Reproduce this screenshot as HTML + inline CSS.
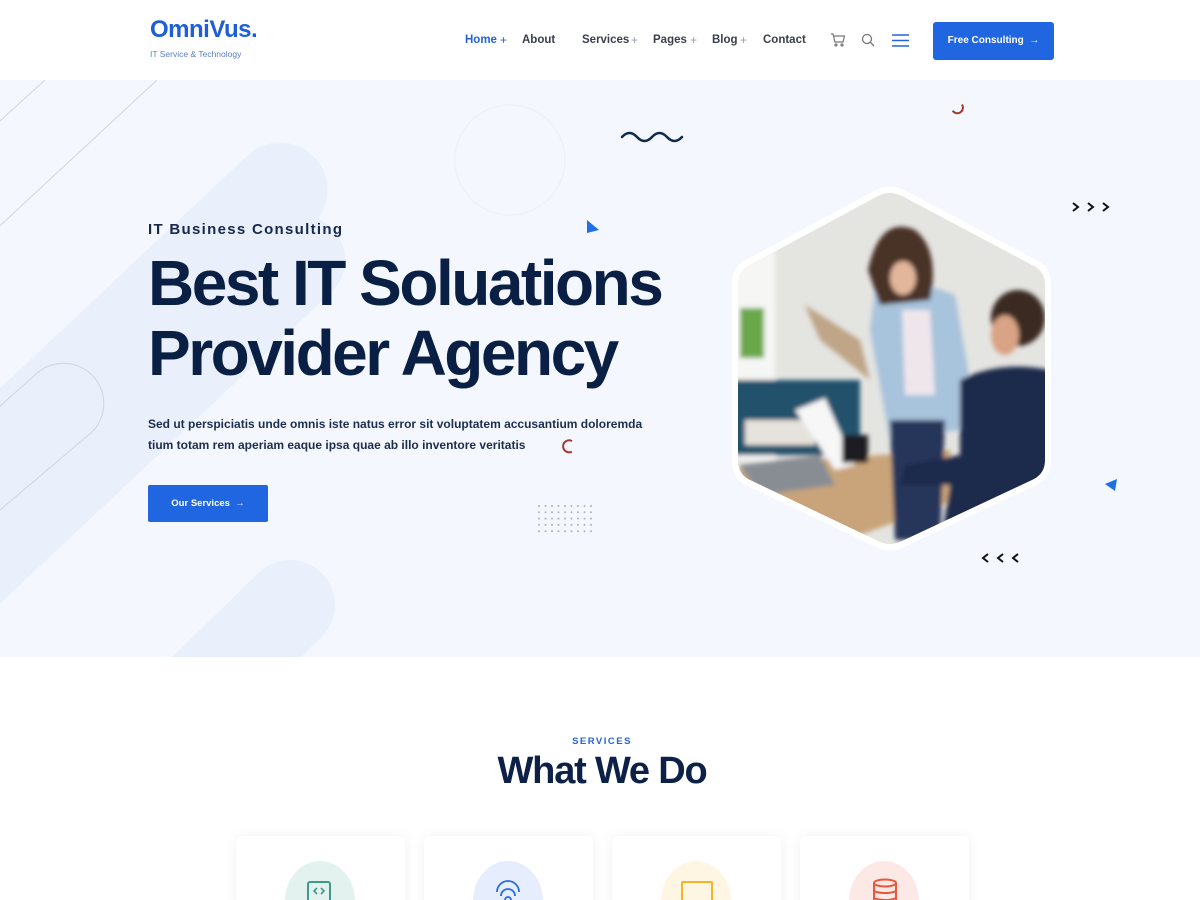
<!DOCTYPE html>
<html><head><meta charset="utf-8"><style>
*{margin:0;padding:0;box-sizing:border-box}
html,body{width:1200px;height:900px;overflow:hidden}
body{background:#fff;font-family:"Liberation Sans",sans-serif;position:relative}
.abs{position:absolute}
.nav a{position:absolute;top:34px;font-size:11.5px;font-weight:bold;color:#3b3f4a;text-decoration:none}
.plus{position:absolute;top:33px;font-size:12px;color:#9aa0ab}
</style></head><body>
<div class="abs" style="left:150px;top:16px;font-size:24px;font-weight:bold;color:#1e5fd8;letter-spacing:-0.5px">OmniVus.</div>
<div class="abs" style="left:150px;top:49px;font-size:8.5px;color:#5a7fc4">IT Service &amp; Technology</div>
<div class="nav">
<a style="left:465px;color:#2563d8">Home</a><span class="plus" style="left:500px;color:#2563d8">+</span>
<a style="left:522px">About</a>
<a style="left:582px">Services</a><span class="plus" style="left:631px">+</span>
<a style="left:653px">Pages</a><span class="plus" style="left:690px">+</span>
<a style="left:712px">Blog</a><span class="plus" style="left:740px">+</span>
<a style="left:763px">Contact</a>
</div>
<svg class="abs" style="left:830px;top:32px" width="16" height="16" viewBox="0 0 16 16" fill="none" stroke="#777" stroke-width="1.2"><path d="M1 2h2l2 8h8l1.5-6H4"/><circle cx="6" cy="13" r="1"/><circle cx="12" cy="13" r="1"/></svg>
<svg class="abs" style="left:861px;top:33px" width="14" height="14" viewBox="0 0 14 14" fill="none" stroke="#777" stroke-width="1.3"><circle cx="6" cy="6" r="4.5"/><path d="M9.5 9.5L13 13"/></svg>
<svg class="abs" style="left:892px;top:34px" width="17" height="13" viewBox="0 0 17 13" stroke="#2563d8" stroke-width="1.6"><path d="M0 1h17M0 6.5h17M0 12h17"/></svg>
<div class="abs" style="left:933px;top:22px;width:121px;height:38px;background:#1f66e0;border-radius:3px;color:#fff;font-size:10px;font-weight:bold;line-height:38px;text-align:center">Free Consulting &nbsp;→</div>

<div class="abs" style="left:0;top:80px;width:1200px;height:577px;background:#f4f8fe;overflow:hidden">
<svg width="1200" height="577" style="position:absolute;left:0;top:0">
<g stroke="#e9f0fc" stroke-linecap="round" fill="none">
<line x1="280" y1="110" x2="-60" y2="430" stroke-width="95"/>
<line x1="290" y1="525" x2="90" y2="720" stroke-width="90"/>
<line x1="300" y1="180" x2="-200" y2="650" stroke-width="90"/>
</g>
<circle cx="510" cy="80" r="55" fill="none" stroke="#edf1f8" stroke-width="1.5"/>
<line x1="45" y1="0" x2="-10" y2="50" stroke="#cfd6e0" stroke-width="1"/>
<line x1="157" y1="0" x2="-10" y2="155" stroke="#cfd6e0" stroke-width="1"/>
<path d="M0 326 L35 295 a40 40 0 0 1 57 57 L0 430" fill="none" stroke="#cfd6e0" stroke-width="1"/>
<path d="M622 57 q7.5 -8 15 0 t15 0 t15 0 t15 0" fill="none" stroke="#0f2a4e" stroke-width="2.5" stroke-linecap="round"/>
<path d="M954 23 a5 5 0 1 0 10 5" fill="none" stroke="#a33a2c" stroke-width="2" transform="rotate(-60 960 28)"/>
<path d="M576 364 a6 6 0 1 0 -7 8" fill="none" stroke="#a33a2c" stroke-width="2" transform="rotate(-40 570 368)"/>
<polygon points="587,140 599,150 587,153" fill="#1f6fe6"/>
<polygon points="1105,404 1117,399 1115,411" fill="#1f6fe6"/>
<g fill="#a9b3c2">
<g id="r"><circle cx="539" cy="426" r="1"/><circle cx="545.5" cy="426" r="1"/><circle cx="552" cy="426" r="1"/><circle cx="558.5" cy="426" r="1"/><circle cx="565" cy="426" r="1"/><circle cx="571.5" cy="426" r="1"/><circle cx="578" cy="426" r="1"/><circle cx="584.5" cy="426" r="1"/><circle cx="591" cy="426" r="1"/></g>
<use href="#r" y="6.3"/><use href="#r" y="12.6"/><use href="#r" y="18.9"/><use href="#r" y="25.2"/>
</g>
<g fill="none" stroke="#111" stroke-width="2"><path d="M1073 123l5 4-5 4M1088 123l5 4-5 4M1103 123l5 4-5 4"/><path d="M988 474l-5 4 5 4M1003 474l-5 4 5 4M1018 474l-5 4 5 4"/></g>
<defs>
<clipPath id="hx"><path d="M878 116 Q890 110 902 116 L1034 186 Q1045 192 1045 205 L1045 380 Q1045 393 1034 399 L902 461 Q890 467 878 461 L748 399 Q738 393 738 380 L738 205 Q738 192 748 186 Z"/></clipPath>
<filter id="bl"><feGaussianBlur stdDeviation="2.5"/></filter>
</defs>
<path d="M876 110 Q890 103 904 110 L1038 181 Q1051 188 1051 203 L1051 382 Q1051 397 1038 404 L904 467 Q890 474 876 467 L744 404 Q732 397 732 382 L732 203 Q732 188 744 181 Z" fill="#fff"/>
<g clip-path="url(#hx)">
<rect x="730" y="100" width="330" height="380" fill="#e4e4e1"/>
<g filter="url(#bl)">
<rect x="730" y="100" width="45" height="280" fill="#f6f6f4"/>
<rect x="740" y="228" width="24" height="50" fill="#6aa84a"/>
<path d="M805 225 L860 260 L870 300 L820 260Z" fill="#b08a62" opacity=".7"/>
<rect x="730" y="300" width="130" height="75" fill="#24516c"/>
<rect x="745" y="340" width="70" height="25" fill="#e6e2dc"/>
<path d="M740 385 L950 370 L955 420 L820 470 L730 450Z" fill="#c9a47a"/>
<path d="M875 210 Q905 195 955 215 L975 330 L960 350 L890 360 L870 250Z" fill="#a8c3dc"/>
<path d="M902 230 L930 230 L935 315 L905 315Z" fill="#efe6ec"/>
<path d="M890 340 L945 340 L940 460 L895 460Z" fill="#25365a"/>
<path d="M868 190 Q880 135 915 150 Q940 170 930 220 L880 225Z" fill="#4a3225"/>
<ellipse cx="903" cy="198" rx="13" ry="17" fill="#e2b69b"/>
<path d="M960 300 Q1000 280 1050 290 L1050 470 L940 470 L950 405 L900 405 L905 385 L960 375Z" fill="#1a2a4c"/>
<ellipse cx="1018" cy="238" rx="27" ry="28" fill="#3b2a20"/>
<ellipse cx="1005" cy="255" rx="14" ry="20" fill="#d9a385"/>
<path d="M795 330 L825 318 L855 385 L835 390Z" fill="#f7f7f7"/>
<rect x="842" y="355" width="26" height="28" fill="#1e1e20"/>
<path d="M740 385 L820 375 L835 405 L760 415Z" fill="#888d94"/>
</g>
</g>
</svg>
<div class="abs" style="left:148px;top:141px;font-size:15px;font-weight:bold;color:#17294a;letter-spacing:1.3px">IT Business Consulting</div>
<div class="abs" style="left:148px;top:168px;font-size:64px;font-weight:bold;color:#0a1f44;letter-spacing:-2.5px;line-height:70px;white-space:nowrap">Best IT Soluations<br>Provider Agency</div>
<div class="abs" style="left:148px;top:334px;font-size:12px;font-weight:bold;color:#1c2d4f;line-height:21px;width:510px">Sed ut perspiciatis unde omnis iste natus error sit voluptatem accusantium doloremda tium totam rem aperiam eaque ipsa quae ab illo inventore veritatis</div>
<div class="abs" style="left:148px;top:405px;width:120px;height:37px;background:#1f66e0;border-radius:2px;color:#fff;font-size:9.5px;font-weight:bold;line-height:37px;text-align:center">Our Services &nbsp;→</div>
</div>

<div class="abs" style="left:0;top:736px;width:1204px;text-align:center;font-size:9.5px;font-weight:bold;color:#2563d8;letter-spacing:1.5px">SERVICES</div>
<div class="abs" style="left:0;top:750px;width:1204px;text-align:center;font-size:38px;font-weight:bold;color:#0d2148;letter-spacing:-1.2px">What We Do</div>
<div class="abs" style="left:236px;top:836px;width:169px;height:80px;background:#fff;border-radius:6px;box-shadow:0 0 14px rgba(0,0,0,.06)"></div>
<div class="abs" style="left:424px;top:836px;width:169px;height:80px;background:#fff;border-radius:6px;box-shadow:0 0 14px rgba(0,0,0,.06)"></div>
<div class="abs" style="left:612px;top:836px;width:169px;height:80px;background:#fff;border-radius:6px;box-shadow:0 0 14px rgba(0,0,0,.06)"></div>
<div class="abs" style="left:800px;top:836px;width:169px;height:80px;background:#fff;border-radius:6px;box-shadow:0 0 14px rgba(0,0,0,.06)"></div>
<div class="abs" style="left:285px;top:861px;width:70px;height:80px;border-radius:50%;background:#e3f2ef"></div>
<div class="abs" style="left:473px;top:861px;width:70px;height:80px;border-radius:50%;background:#e6edfc"></div>
<div class="abs" style="left:661px;top:861px;width:70px;height:80px;border-radius:50%;background:#fff5e3"></div>
<div class="abs" style="left:849px;top:861px;width:70px;height:80px;border-radius:50%;background:#fce9e6"></div>
<svg class="abs" style="left:305px;top:880px" width="30" height="20"><rect x="3" y="2" width="22" height="20" rx="2" fill="none" stroke="#3d9a8a" stroke-width="2"/><path d="M12 8l-3 3 3 3M16 8l3 3-3 3" fill="none" stroke="#3d9a8a" stroke-width="1.6"/></svg>
<svg class="abs" style="left:493px;top:878px" width="30" height="22" fill="none" stroke="#2a6ae3" stroke-width="1.8"><path d="M4 14a11 11 0 0 1 22 0M8 18a7 7 0 0 1 14 0M12 22a3 3 0 0 1 6 0"/></svg>
<svg class="abs" style="left:680px;top:880px" width="34" height="20"><rect x="2" y="2" width="30" height="22" rx="1" fill="none" stroke="#f5b425" stroke-width="2"/></svg>
<svg class="abs" style="left:870px;top:878px" width="30" height="22" fill="none" stroke="#e8573c" stroke-width="2"><ellipse cx="15" cy="5" rx="11" ry="3.5"/><path d="M4 5v18M26 5v18M4 12c0 4 22 4 22 0M4 19c0 4 22 4 22 0"/></svg>
</body></html>
